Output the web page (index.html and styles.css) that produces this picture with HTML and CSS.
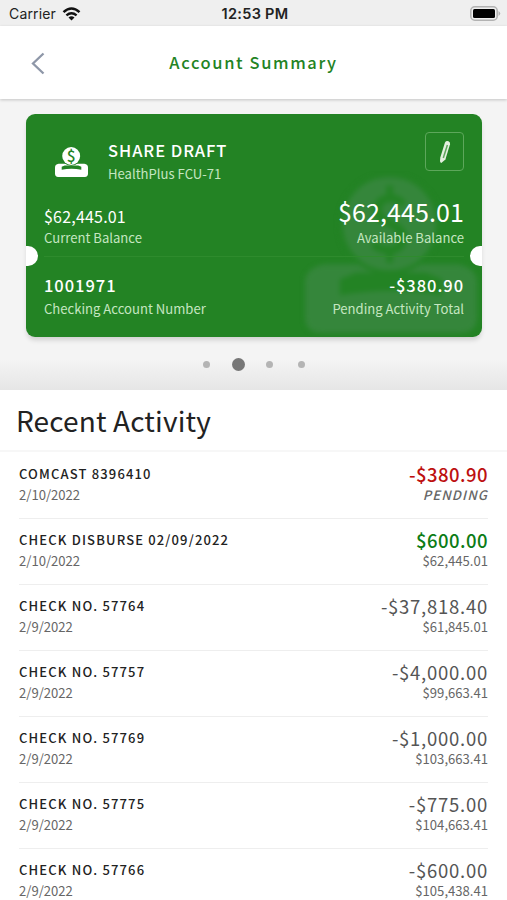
FILE: index.html
```
<!DOCTYPE html>
<html lang="en">
<head>
    <meta charset="UTF-8">
    <title>Account Summary</title>
    <link rel="stylesheet" href="styles.css">
</head>
<body>
<svg class="defs" width="0" height="0">
    <symbol id="deposit" viewBox="0 0 32 29">
        <path d="M3.500 16.200H28.500Q32 17 32 19.500V26Q32 29 29 29H3Q0 29 0 26V19.500Q0 17 3.500 16.200Z"/>
        <path d="M9.500 17.800H22.500L25.500 19V22Q16 20.300 6.500 22V19Z" fill="#238324"/>
        <circle cx="15.700" cy="8.800" r="9.400" fill="#238324"/>
        <circle cx="15.700" cy="8.700" r="8.700"/>
        <text x="15.700" y="14.200" text-anchor="middle" font-size="15" font-weight="500" fill="#238324">$</text>
    </symbol>
</svg>

<div class="statusbar">
    <div class="carrier">
        <span>Carrier</span>
        <svg width="19" height="14" viewBox="0 0 18 14" fill="none" stroke="#111">
            <path d="M1 5.100Q9-2 17 5.100" stroke-width="2.500"/>
            <path d="M3.900 8.300Q9 4 14.100 8.300" stroke-width="2.400"/>
            <path d="M6 10.500Q9 7.800 12 10.500L9 13.500Z" fill="#111" stroke="none"/>
        </svg>
    </div>
    <div class="time">12:53 PM</div>
    <div class="battery">
        <svg width="31" height="15" viewBox="0 0 31 15">
            <rect x=".8" y=".8" width="26.400" height="13.400" rx="4" fill="#efefef" stroke="#b2b2b2" stroke-width="1.600"/>
            <rect x="3" y="3" width="22" height="9" rx="1.500"/>
            <path d="M28.500 5Q32 7.500 28.500 10Z" fill="#b2b2b2"/>
        </svg>
    </div>
</div>

<div class="header">
    <svg class="back" width="14" height="23" viewBox="0 0 14 23" fill="none" stroke="#8e97a8" stroke-width="2.300">
        <path d="M12.500 1.500L2 11.500L12.500 21.500"/>
    </svg>
    <h1>Account Summary</h1>
</div>

<div class="accounts">
    <div class="card">
        <svg class="watermark"><use href="#deposit"/></svg>
        <div class="card-head">
            <div class="icon"><svg width="33" height="30"><use href="#deposit"/></svg></div>
            <div class="names">
                <div class="title">SHARE DRAFT</div>
                <div class="label">HealthPlus FCU-71</div>
            </div>
            <div class="edit">
                <svg width="12" height="24" viewBox="0 0 12 24">
                    <path d="M6 2.500Q7 .5 9.500 1.200Q11.500 2 11 4.200L6.400 19.500L2.300 23Q1 22.500 1 21L1.300 17.500Z" fill="#e4f0df"/>
                    <path d="M8.400 5L4.300 18" stroke="#5fa65c" stroke-width="1.500"/>
                </svg>
            </div>
        </div>
        <div class="balances">
            <div>
                <div class="current">$62,445.01</div>
                <div class="label">Current Balance</div>
            </div>
            <div class="right">
                <div class="available">$62,445.01</div>
                <div class="label">Available Balance</div>
            </div>
        </div>
        <div class="details">
            <div>
                <div class="value">1001971</div>
                <div class="label">Checking Account Number</div>
            </div>
            <div class="right">
                <div class="value">-$380.90</div>
                <div class="label">Pending Activity Total</div>
            </div>
        </div>
        <div class="notch notch-left"></div>
        <div class="notch notch-right"></div>
    </div>
    <div class="dots">
        <span></span>
        <span class="active"></span>
        <span></span>
        <span></span>
    </div>
</div>

<h2>Recent Activity</h2>
<ul class="activity">
    <li>
        <div>
            <div class="name">COMCAST 8396410</div>
            <div class="date">2/10/2022</div>
        </div>
        <div class="right">
            <div class="amount red">-$380.90</div>
            <div class="pending">PENDING</div>
        </div>
    </li>
    <li>
        <div>
            <div class="name">CHECK DISBURSE 02/09/2022</div>
            <div class="date">2/10/2022</div>
        </div>
        <div class="right">
            <div class="amount green">$600.00</div>
            <div class="balance">$62,445.01</div>
        </div>
    </li>
    <li>
        <div>
            <div class="name">CHECK NO. 57764</div>
            <div class="date">2/9/2022</div>
        </div>
        <div class="right">
            <div class="amount">-$37,818.40</div>
            <div class="balance">$61,845.01</div>
        </div>
    </li>
    <li>
        <div>
            <div class="name">CHECK NO. 57757</div>
            <div class="date">2/9/2022</div>
        </div>
        <div class="right">
            <div class="amount">-$4,000.00</div>
            <div class="balance">$99,663.41</div>
        </div>
    </li>
    <li>
        <div>
            <div class="name">CHECK NO. 57769</div>
            <div class="date">2/9/2022</div>
        </div>
        <div class="right">
            <div class="amount">-$1,000.00</div>
            <div class="balance">$103,663.41</div>
        </div>
    </li>
    <li>
        <div>
            <div class="name">CHECK NO. 57775</div>
            <div class="date">2/9/2022</div>
        </div>
        <div class="right">
            <div class="amount">-$775.00</div>
            <div class="balance">$104,663.41</div>
        </div>
    </li>
    <li>
        <div>
            <div class="name">CHECK NO. 57766</div>
            <div class="date">2/9/2022</div>
        </div>
        <div class="right">
            <div class="amount">-$600.00</div>
            <div class="balance">$105,438.41</div>
        </div>
    </li>
</ul>
</body>
</html>
```
FILE: styles.css
```
* {
    box-sizing: border-box;
}
body {
    margin: 0;
    height: 900px;
    overflow: hidden;
    background: #fff;
    color: #222;
    font-family: "Noto Sans CJK SC", "Open Sans", sans-serif;
}
svg {
    display: block;
}
.defs {
    display: none;
}
.right {
    text-align: right;
}

/* status bar */
.statusbar {
    display: grid;
    grid-template-columns: 1fr auto 1fr;
    align-items: center;
    height: 26px;
    padding: 1px 6px 0 9px;
    background: #efefef;
    font-family: Inter, sans-serif;
    font-size: 14px;
    color: #222;
}
.carrier {
    display: flex;
    align-items: center;
    gap: 6px;
    letter-spacing: 0.15px;
}
.time {
    font-weight: 600;
    font-size: 14.5px;
    letter-spacing: 0.3px;
}
.battery {
    justify-self: end;
}

/* header */
.header {
    display: grid;
    grid-template-columns: 1fr auto 1fr;
    align-items: center;
    position: relative;
    height: 73px;
    padding: 1px 31px 0;
    background: #fff;
    box-shadow: 0 1px 3px rgba(0, 0, 0, 0.2);
}
h1 {
    margin: 0;
    padding-bottom: 2px;
    font-size: 16.5px;
    font-weight: 500;
    line-height: 24px;
    letter-spacing: 1.6px;
    color: #238324;
}

/* account card */
.accounts {
    height: 291px;
    padding: 15px 25px 0 26px;
    background: linear-gradient(#f4f4f4 260px, #e6e6e6);
}
.card {
    position: relative;
    height: 223px;
    padding: 18px;
    border-radius: 9px;
    background: #238324;
    color: #fff;
    box-shadow: 0 4px 5px -1px rgba(0, 0, 0, 0.15);
}
.watermark {
    position: absolute;
    right: 5px;
    bottom: 4px;
    width: 172px;
    height: 156px;
    fill: #35863b;
    filter: blur(2.5px);
}
.card-head, .balances, .details {
    display: flex;
    position: relative;
}
.card-head {
    height: 68px;
}
.icon {
    width: 64px;
    padding: 15px 0 0 11px;
    fill: #fff;
}
.names {
    flex: 1;
    padding-top: 5px;
}
.title {
    font-size: 16.5px;
    font-weight: 500;
    line-height: 26px;
    letter-spacing: 0.95px;
}
.label {
    font-size: 13.1px;
    line-height: 22px;
    color: #c5e6c1;
}
.edit {
    display: flex;
    align-items: center;
    justify-content: center;
    width: 39px;
    height: 39px;
    border: 1px solid #5da75b;
    border-radius: 4px;
}
.balances {
    justify-content: space-between;
    align-items: flex-end;
    height: 57px;
    padding-bottom: 7px;
    border-bottom: 1px solid #2e8b2d;
}
.current {
    font-size: 16px;
    line-height: 21px;
    letter-spacing: 0.2px;
}
.available {
    font-size: 25px;
    line-height: 32px;
    letter-spacing: 0.1px;
}
.details {
    justify-content: space-between;
    padding-top: 16px;
}
.details .label {
    line-height: 24px;
}
.value {
    font-size: 16.5px;
    font-weight: 500;
    line-height: 24px;
    letter-spacing: 0.95px;
}
.notch {
    position: absolute;
    top: 132px;
    width: 12px;
    height: 20px;
    background: #fff;
}
.notch-left {
    left: 0;
    border-radius: 0 10px 10px 0;
}
.notch-right {
    right: 0;
    border-radius: 10px 0 0 10px;
}
.dots {
    display: flex;
    align-items: center;
    justify-content: center;
    gap: 24.7px;
    height: 54px;
}
.dots span {
    width: 7px;
    height: 7px;
    border-radius: 50%;
    background: #b4b4b4;
}
.dots .active {
    width: 13px;
    height: 13px;
    margin: 0 -3px;
    background: #777;
}

/* recent activity */
h2 {
    margin: 0;
    height: 62px;
    padding: 0 16px;
    border-bottom: 2px solid #f7f7f7;
    font-size: 28px;
    font-weight: 400;
    line-height: 60px;
    letter-spacing: 0.15px;
}
.activity {
    margin: 0;
    padding: 0 19px;
    list-style: none;
}
.activity li {
    display: flex;
    justify-content: space-between;
    height: 66px;
    padding-top: 11px;
}
.activity li + li {
    border-top: 1px solid #eee;
    padding-top: 10px;
}
.name {
    font-size: 13px;
    font-weight: 500;
    line-height: 21px;
    letter-spacing: 1.15px;
}
.date, .balance {
    font-size: 13.1px;
    line-height: 22px;
    color: #666;
}
.balance {
    line-height: 20px;
}
.amount {
    font-size: 18.5px;
    line-height: 22px;
    letter-spacing: 0.75px;
    color: #555;
}
.red {
    font-weight: 500;
    letter-spacing: 0.45px;
    color: #bd1010;
}
.green {
    font-weight: 500;
    letter-spacing: 0.45px;
    color: #0c7c15;
}
.pending {
    font-size: 13px;
    font-style: italic;
    font-weight: 500;
    line-height: 19px;
    letter-spacing: 1.1px;
    color: #666;
}
```
